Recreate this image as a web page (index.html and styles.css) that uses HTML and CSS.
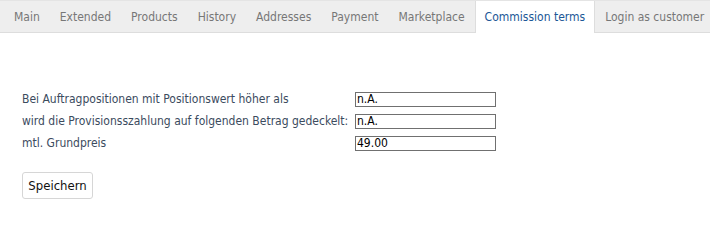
FILE: index.html
```html
<!DOCTYPE html>
<html>
<head>
<meta charset="utf-8">
<link rel="stylesheet" href="styles.css">
</head>
<body>
<nav class="tabs">
  <a class="tab">Main</a>
  <a class="tab">Extended</a>
  <a class="tab">Products</a>
  <a class="tab">History</a>
  <a class="tab">Addresses</a>
  <a class="tab">Payment</a>
  <a class="tab">Marketplace</a>
  <a class="tab active">Commission terms</a>
  <a class="tab">Login as customer</a>
</nav>
<form class="content">
  <div class="grid">
    <label class="lbl">Bei Auftragpositionen mit Positionswert höher als</label>
    <div class="cell"><input class="field" type="text" value="n.A."></div>
    <label class="lbl">wird die Provisionsszahlung auf folgenden Betrag gedeckelt:</label>
    <div class="cell"><input class="field" type="text" value="n.A."></div>
    <label class="lbl">mtl. Grundpreis</label>
    <div class="cell"><input class="field" type="text" value="49.00"></div>
  </div>
  <button class="save" type="button">Speichern</button>
</form>
</body>
</html>
```
FILE: styles.css
```css
html, body {
  margin: 0;
  padding: 0;
  background: #fff;
}
body {
  font-family: "DejaVu Sans Condensed", "DejaVu Sans", sans-serif;
  font-size: 12px;
}
.tabs {
  display: flex;
  height: 31px;
  background: #eeeeee;
  border-top: 1px solid #e4e4e4;
  border-bottom: 1px solid #dddddd;
  padding-left: 4px;
  box-sizing: content-box;
  overflow: visible;
}
.tab {
  display: flex;
  align-items: center;
  flex-shrink: 0;
  white-space: nowrap;
  padding: 0 10px;
  color: #777777;
  font-size: 12px;
}
.tab.active {
  background: #ffffff;
  color: #1b5796;
  padding: 0 9px;
  border-left: 1px solid #dddddd;
  border-right: 1px solid #dddddd;
  margin-bottom: -1px;
  height: 32px;
}
.content {
  padding: 55px 22px 0 22px;
  margin: 0;
}
.grid {
  display: grid;
  grid-template-columns: 333px auto;
  grid-auto-rows: 22px;
  align-items: center;
}
.lbl {
  color: #3b4b5e;
  font-size: 12px;
  white-space: nowrap;
}
.cell {
  display: flex;
  align-items: center;
}
.field {
  width: 141px;
  height: 15px;
  box-sizing: border-box;
  border: 1px solid #707070;
  padding: 0 1px;
  margin: 0;
  font-family: "DejaVu Sans Condensed", "DejaVu Sans", sans-serif;
  font-size: 12px;
  color: #000;
  background: #fff;
}
.save {
  margin-top: 18px;
  width: 71px;
  height: 27px;
  border: 1px solid #d6d6d6;
  border-radius: 3px;
  background: #fff;
  color: #111;
  font-family: "DejaVu Sans Condensed", "DejaVu Sans", sans-serif;
  font-size: 13px;
  padding: 0;
}
```
